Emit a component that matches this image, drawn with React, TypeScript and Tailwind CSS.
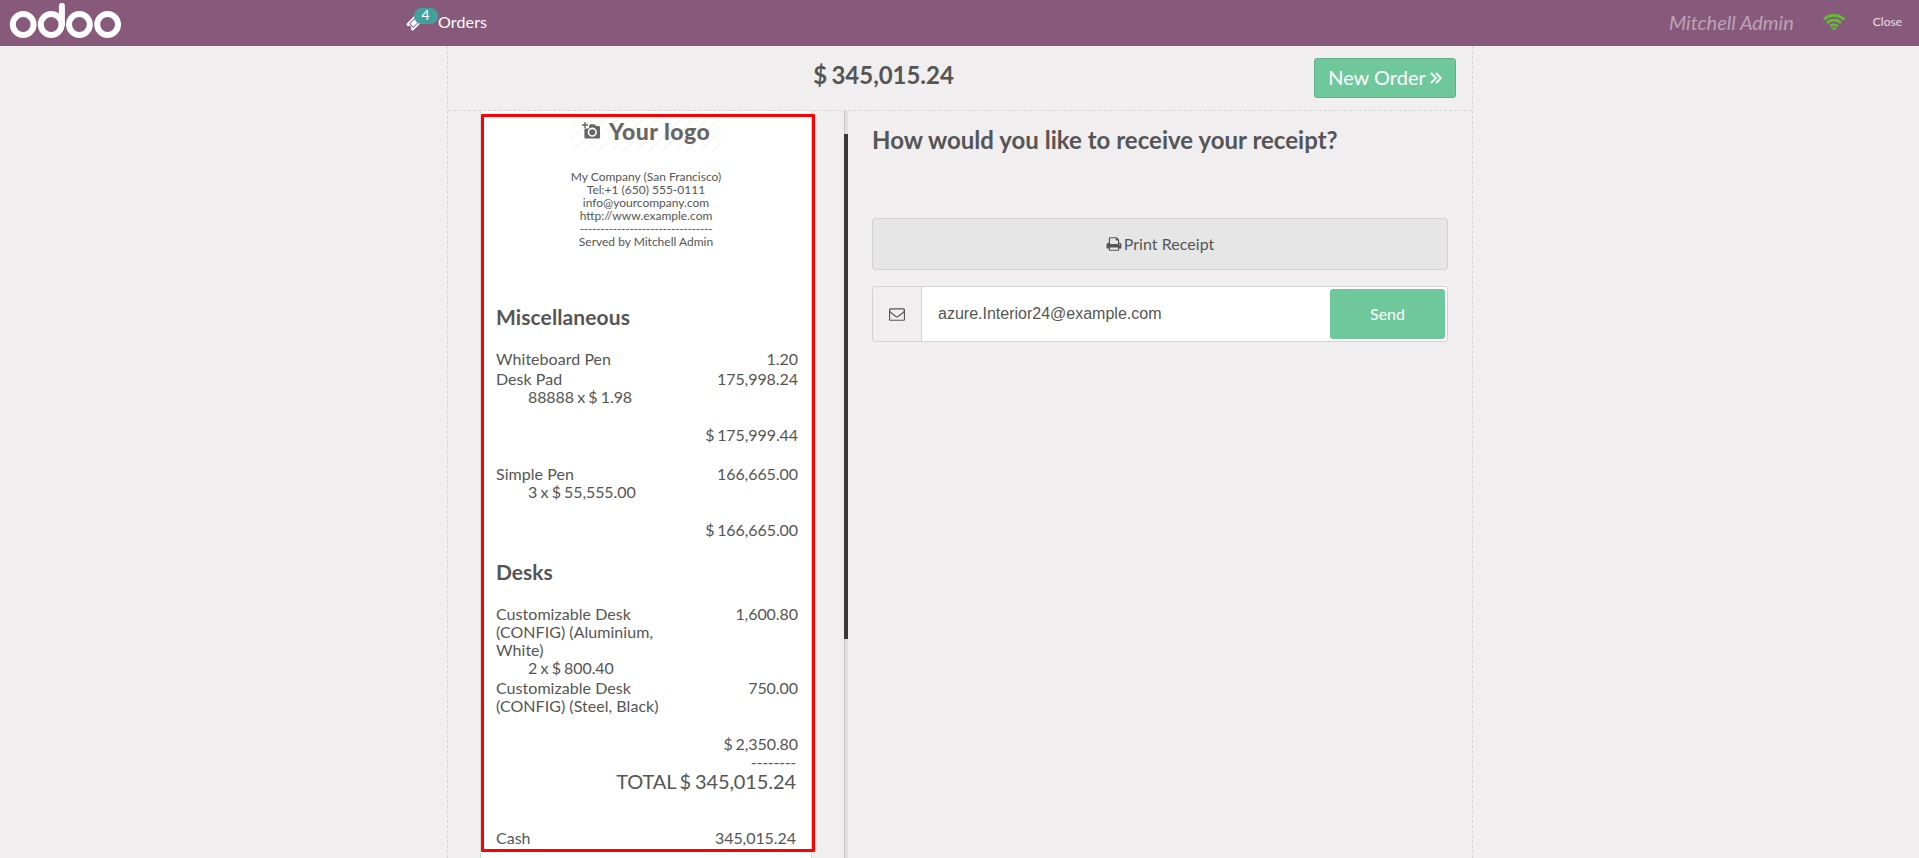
import React from "react";

type Line = { name: string; price: string; detail?: string };

const TICKET =
  "M1024 452l316 316-572 572-316-316zm-211 979l618-618q19-19 19-45t-19-45l-362-362q-18-18-45-18t-45 18l-618 618q-19 19-19 45t19 45l362 362q18 18 45 18t45-18zm889-637l-907 908q-37 37-90.5 37t-90.5-37l-126-126q56-56 56-136t-56-136-136-56-136 56l-125-126q-37-37-37-90.5t37-90.5l907-906q37-37 90.5-37t90.5 37l125 125q-56 56-56 136t56 136 136 56 136-56l126 125q37 37 37 90.5t-37 90.5z";
const PRINT =
  "M448 1536h896v-256h-896v256zm0-640h896v-384h-160q-40 0-68-28t-28-68v-160h-640v640zm1152 64q0-26-19-45t-45-19-45 19-19 45 19 45 45 19 45-19 19-45zm128 0v416q0 13-9.5 22.5t-22.5 9.5h-224v160q0 40-28 68t-68 28h-960q-40 0-68-28t-28-68v-160h-224q-13 0-22.5-9.5t-9.5-22.5v-416q0-79 56.5-135.5t135.5-56.5h64v-544q0-40 28-68t68-28h672q40 0 88 20t76 48l152 152q28 28 48 76t20 88v256h64q79 0 135.5 56.5t56.5 135.5z";
const ENVELOPE =
  "M1664 1504v-768q-32 36-69 66-268 206-426 338-51 43-83 67t-86.5 48.5-102.5 24.5h-2q-48 0-102.5-24.5t-86.5-48.5-83-67q-158-132-426-338-37-30-69-66v768q0 13 9.5 22.5t22.5 9.5h1472q13 0 22.5-9.5t9.5-22.5zm0-1051v-24.5l-.5-13-3-12.5-5.5-9-9-7.5-14-2.5h-1472q-13 0-22.5 9.5t-9.5 22.5q0 168 147 284 193 152 401 317 6 5 35 29.5t46 37.5 44.5 31.5 50.5 27.5 43 9h2q20 0 43-9t50.5-27.5 44.5-31.5 46-37.5 35-29.5q208-165 401-317 54-43 100.5-115.5t46.5-131.5zm128-37v1088q0 66-47 113t-113 47h-1472q-66 0-113-47t-47-113v-1088q0-66 47-113t113-47h1472q66 0 113 47t47 113z";

function Glyph({ d, className }: { d: string; className: string }) {
  return (
    <svg viewBox="0 0 1792 1792" fill="currentColor" className={className}>
      <path d={d} />
    </svg>
  );
}

function BrandMark() {
  return (
    <svg width="112" height="36" viewBox="0 0 112 36" fill="none" stroke="#fff" strokeWidth="6" className="ml-[9px] mt-[3px] shrink-0">
      <circle cx="14.2" cy="21.5" r="10.4" />
      <circle cx="42.2" cy="21.5" r="10.4" />
      <circle cx="70.4" cy="21.5" r="10.4" />
      <circle cx="98.6" cy="21.5" r="10.4" />
      <path d="M52.9 21.5V2.8" strokeLinecap="round" />
    </svg>
  );
}

function Wifi() {
  return (
    <svg width="22" height="17" viewBox="0 0 22 17" fill="none" stroke="#5fc22c" strokeWidth="2.7">
      <path d="M0.9 5.6a14.4 14.4 0 0 1 20.2 0" />
      <path d="M4.1 9a9.8 9.8 0 0 1 13.8 0" />
      <path d="M7.3 12.3a5.2 5.2 0 0 1 7.4 0" />
      <path d="M11 16.6l-2.2-2.2a3.2 3.2 0 0 1 4.4 0z" fill="#5fc22c" stroke="none" />
    </svg>
  );
}

function Header() {
  return (
    <header className="flex h-[46px] shrink-0 items-start bg-[#875a7b] text-white">
      <BrandMark />
      <div className="relative ml-[284.5px] flex h-[46px] items-center">
        <Glyph d={TICKET} className="-mt-px size-[17px]" />
        <span className="absolute left-2 top-2 flex h-4 w-6 items-center justify-center rounded-full bg-[#44a09c] text-[14px] leading-4"><span className="-mt-[2px]">4</span></span>
        <span className="-mt-[2px] ml-[15.5px] text-[16px] leading-none tracking-[0.15px]">Orders</span>
      </div>
      <div className="ml-auto flex h-[44px] items-center">
        <span className="text-[20px] italic leading-none text-white/45">Mitchell Admin</span>
        <span className="ml-[29px]"><Wifi /></span>
        <span className="ml-[28px] mr-[17px] text-[12px] leading-none text-white/80">Close</span>
      </div>
    </header>
  );
}

function LogoPlaceholder() {
  return (
    <div className="mx-auto mt-[5px] flex h-[35px] w-[150px] items-start bg-[repeating-linear-gradient(135deg,#fff_0px,#fff_7px,#f8f8f8_7px,#f8f8f8_9px)] pl-[11px] pt-[6px] text-[#666]">
      <svg width="18" height="18" viewBox="0 0 18 18" fill="none">
        <path d="M2.4 6.5V15.2q0 1.3 1.3 1.3H16.7q1.3 0 1.3-1.3V5.2q0-1.3-1.3-1.3H14L12.6 2.2H8L7 3.9V6.5z" fill="#666" />
        <path d="M3 0v6M0 3h6" stroke="#666" strokeWidth="1.4" />
        <circle cx="10.3" cy="10.2" r="3.8" stroke="#fff" strokeWidth="1.6" />
      </svg>
      <span className="ml-[9px] whitespace-nowrap text-[23px] font-black leading-[19px] tracking-[0.5px]">Your logo</span>
    </div>
  );
}

function Items({ lines, subtotal }: { lines: Line[]; subtotal: string }) {
  return (
    <div>
      {lines.map((l) => (
        <div key={l.name} className="mb-[2px]">
          <div className="flex justify-between">
            <span className="w-[181px] tracking-[0.04px]">{l.name}</span>
            <span className="tracking-[-0.06px]">{l.price}</span>
          </div>
          {l.detail && <div className="pl-8 tracking-[-0.1px] [word-spacing:-0.7px]">{l.detail}</div>}
        </div>
      ))}
      <div className="mt-5 text-right tracking-[-0.08px] [word-spacing:-1.2px]">{subtotal}</div>
    </div>
  );
}

function Receipt() {
  return (
    <div className="ml-8 h-[1100px] w-[332px] shrink-0 border border-t-0 border-[#d8d8d8] bg-white pl-[15px] pr-[13px] text-[16px] leading-[18px]">
      <div className="mr-[2px]">
        <LogoPlaceholder />
        <div className="mt-[19px] text-center text-[12px] leading-[13px]">
          <div>My Company (San Francisco)</div>
          <div>Tel:+1 (650) 555-0111</div>
          <div>info@yourcompany.com</div>
          <div>http://www.example.com</div>
          <div className="tracking-[-0.31px]">--------------------------------</div>
          <div>Served by Mitchell Admin</div>
        </div>
      </div>
      <h3 className="mt-[57px] text-[21px] font-bold leading-6 tracking-[0.1px]">Miscellaneous</h3>
      <div className="mt-[21px]">
        <Items
          lines={[
            { name: "Whiteboard Pen", price: "1.20" },
            { name: "Desk Pad", price: "175,998.24", detail: "88888 x $ 1.98" },
          ]}
          subtotal="$ 175,999.44"
        />
      </div>
      <div className="mt-[21px]">
        <Items lines={[{ name: "Simple Pen", price: "166,665.00", detail: "3 x $ 55,555.00" }]} subtotal="$ 166,665.00" />
      </div>
      <h3 className="mt-[21px] text-[21px] font-bold leading-6">Desks</h3>
      <div className="mt-[21px]">
        <Items
          lines={[
            { name: "Customizable Desk (CONFIG) (Aluminium, White)", price: "1,600.80", detail: "2 x $ 800.40" },
            { name: "Customizable Desk (CONFIG) (Steel, Black)", price: "750.00" },
          ]}
          subtotal="$ 2,350.80"
        />
      </div>
      <div className="mr-[2px] text-right tracking-[-0.3px]">--------</div>
      <div className="-mt-px mr-[2px] text-right text-[20px] leading-[22px] tracking-[-0.1px] [word-spacing:-1.2px]">TOTAL $ 345,015.24</div>
      <div className="mr-[2px] mt-[37px] flex justify-between">
        <span>Cash</span>
        <span className="tracking-[-0.06px]">345,015.24</span>
      </div>
    </div>
  );
}

function Delivery() {
  return (
    <div className="flex grow flex-col pl-6 pr-6 pt-[15px]">
      <h1 className="text-[24px] font-bold leading-7 tracking-[0.02px]">How would you like to receive your receipt?</h1>
      <button className="mt-[64px] flex h-[52px] items-center justify-center gap-[2px] rounded-[3px] border border-[#d0d2d3] bg-[#e6e6e6] text-[16px] tracking-[0.04px]">
        <Glyph d={PRINT} className="size-4" />
        Print Receipt
      </button>
      <div className="mt-4 flex h-[56px] overflow-hidden rounded-[3px] border border-[#d0d2d3] bg-white">
        <div className="flex w-[49px] items-center justify-center border-r border-[#d0d2d3] bg-[#f0eeee]">
          <Glyph d={ENVELOPE} className="-mt-px size-4" />
        </div>
        <div className="flex grow items-center pl-4 font-['Liberation_Sans'] text-[16px]">azure.Interior24@example.com</div>
        <button className="m-[2px] flex w-[115px] items-center justify-center rounded-[3px] bg-[#6ec89b] text-[16px] text-white">Send</button>
      </div>
    </div>
  );
}

export default function App() {
  return (
    <div className="flex h-[858px] w-[1919px] flex-col overflow-hidden bg-[#f0eeee] font-[Lato,sans-serif] text-[#555]">
      <Header />
      <main className="ml-[447px] flex h-[812px] w-[1026px] flex-col border-x border-dashed border-[#d6d5d5]">
        <div className="relative flex h-[65px] shrink-0 justify-center border-b border-dashed border-[#d6d5d5]">
          <h1 className="mr-[153px] mt-[15px] text-[24px] font-bold leading-7 tracking-[-0.04px] [word-spacing:-1.4px]">$ 345,015.24</h1>
          <button className="absolute right-4 top-3 flex h-10 w-[142px] items-center justify-center gap-1 rounded-[3px] border border-[#64af8a] bg-[#6ec89b] pb-[2px] text-[20px] text-white">
            New Order
            <svg width="12" height="12" viewBox="0 0 12 12" fill="none" stroke="currentColor" strokeWidth="1.8" className="mt-[2px]">
              <path d="M1 1l5 5-5 5M6 1l5 5-5 5" />
            </svg>
          </button>
        </div>
        <div className="flex h-[747px] overflow-hidden">
          <div className="relative flex w-[400px] shrink-0">
            <Receipt />
            <div className="absolute left-[33px] top-[3px] h-[738px] w-[334px] rounded-[1px] border-3 border-[#fe0000]" />
            <div className="ml-8 w-1 border-l border-[#c4c4c4] bg-[#e0e0e0]">
              <div className="-ml-px mt-[23px] h-[505px] w-1 bg-[#393738]" />
            </div>
          </div>
          <Delivery />
        </div>
      </main>
    </div>
  );
}
